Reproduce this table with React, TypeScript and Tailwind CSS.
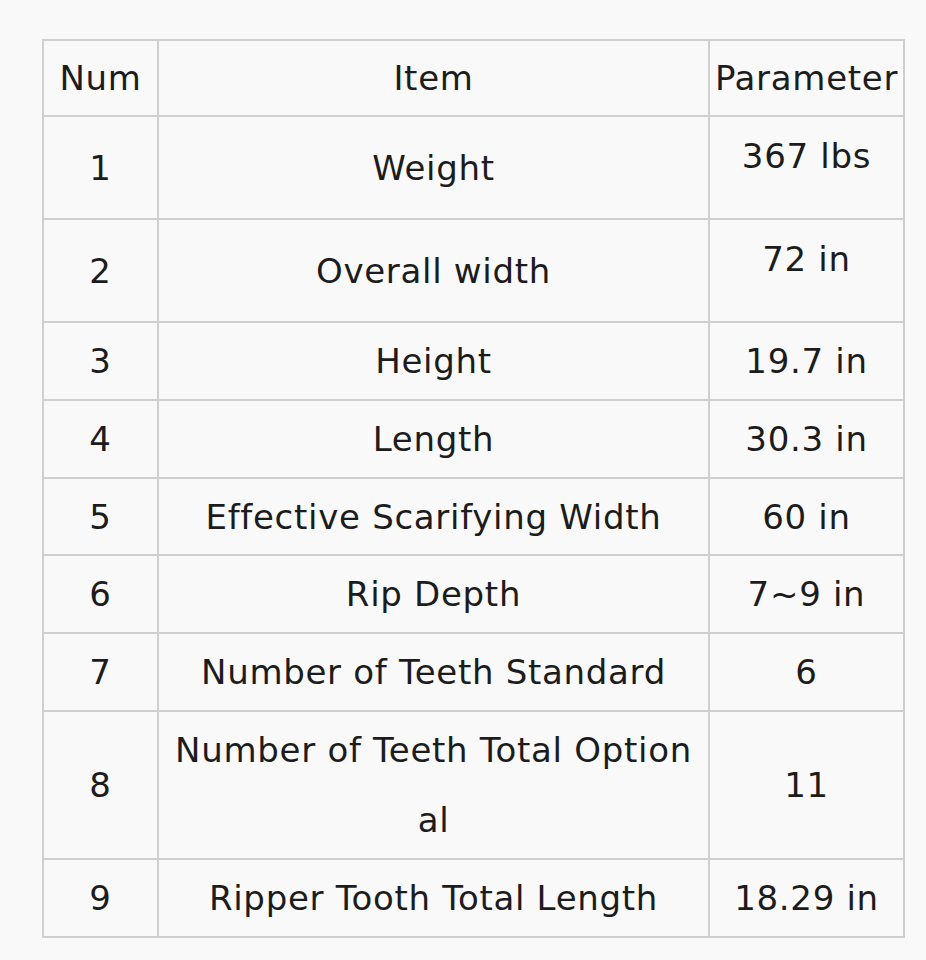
import React from "react";

const rows: { n: string; item: React.ReactNode; param: string; tall?: boolean; h: number }[] = [
  { n: "1", item: "Weight", param: "367 lbs", tall: true, h: 103 },
  { n: "2", item: "Overall width", param: "72 in", tall: true, h: 103 },
  { n: "3", item: "Height", param: "19.7 in", h: 78 },
  { n: "4", item: "Length", param: "30.3 in", h: 78 },
  { n: "5", item: "Effective Scarifying Width", param: "60 in", h: 77 },
  { n: "6", item: "Rip Depth", param: "7~9 in", h: 78 },
  { n: "7", item: "Number of Teeth Standard", param: "6", h: 78 },
  {
    n: "8",
    item: (
      <>
        Number of Teeth Total Option
        <br />
        al
      </>
    ),
    param: "11",
    h: 148,
  },
  { n: "9", item: "Ripper Tooth Total Length", param: "18.29 in", h: 78 },
];

export default function App() {
  return (
    <div
      className="min-h-[960px] w-[926px] bg-[#f9f9f9] pt-[39px] pl-[42px]"
      style={{ fontFamily: '"DejaVu Sans", sans-serif' }}
    >
      <table className="w-[861px] table-fixed border-collapse text-[34px] leading-[70px] tracking-[0.7px] text-[#1c1c1c]">
        <colgroup>
          <col className="w-[115px]" />
          <col className="w-[551px]" />
          <col className="w-[195px]" />
        </colgroup>
        <thead>
          <tr className="h-[76px]">
            <th className="border-2 border-[#cfcfcf] p-0 text-center align-middle font-normal">Num</th>
            <th className="border-2 border-[#cfcfcf] p-0 text-center align-middle font-normal">Item</th>
            <th className="border-2 border-[#cfcfcf] p-0 text-center align-middle font-normal whitespace-nowrap">Parameter</th>
          </tr>
        </thead>
        <tbody>
          {rows.map((r) => (
            <tr key={r.n} style={{ height: r.h }}>
              <td className="border-2 border-[#cfcfcf] p-0 text-center align-middle">{r.n}</td>
              <td className="border-2 border-[#cfcfcf] p-0 text-center align-middle">{r.item}</td>
              <td
                className={
                  r.tall
                    ? "border-2 border-[#cfcfcf] p-0 pt-[4px] text-center align-top"
                    : "border-2 border-[#cfcfcf] p-0 text-center align-middle"
                }
              >
                {r.param}
              </td>
            </tr>
          ))}
        </tbody>
      </table>
    </div>
  );
}
